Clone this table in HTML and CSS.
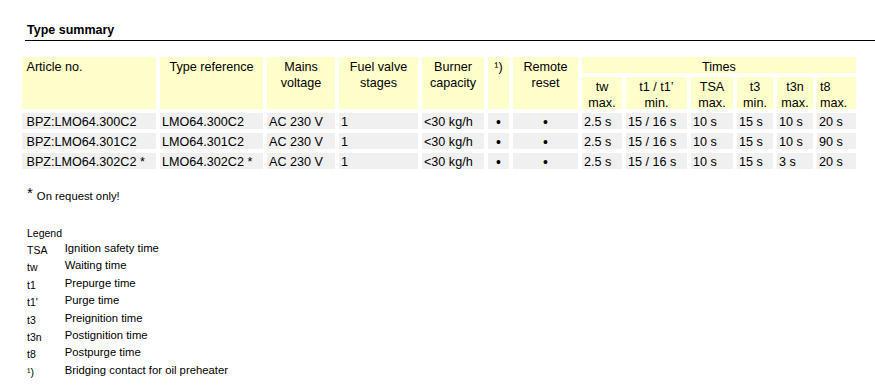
FILE: index.html
```html
<!DOCTYPE html>
<html lang="en">
<head>
<meta charset="utf-8">
<title>Type summary</title>
<link rel="stylesheet" href="styles.css">
</head>
<body>
<h2 class="title">Type summary</h2>

<div class="types">
  <div class="hd span2 first">Article no.</div>
  <div class="hd span2 c">Type reference</div>
  <div class="hd span2 c">Mains<br>voltage</div>
  <div class="hd span2 c">Fuel valve<br>stages</div>
  <div class="hd span2 c">Burner<br>capacity</div>
  <div class="hd span2 c">¹)</div>
  <div class="hd span2 c">Remote<br>reset</div>
  <div class="hd times c">Times</div>
  <div class="hd c">tw<br>max.</div>
  <div class="hd c">t1 / t1’<br>min.</div>
  <div class="hd c">TSA<br>max.</div>
  <div class="hd c">t3<br>min.</div>
  <div class="hd c">t3n<br>max.</div>
  <div class="hd last">t8<br>max.</div>

  <div class="cell first">BPZ:LMO64.300C2</div>
  <div class="cell">LMO64.300C2</div>
  <div class="cell">AC 230 V</div>
  <div class="cell">1</div>
  <div class="cell">&lt;30 kg/h</div>
  <div class="cell c dot">•</div>
  <div class="cell c dot">•</div>
  <div class="cell">2.5 s</div>
  <div class="cell">15 / 16 s</div>
  <div class="cell">10 s</div>
  <div class="cell">15 s</div>
  <div class="cell">10 s</div>
  <div class="cell">20 s</div>

  <div class="cell first">BPZ:LMO64.301C2</div>
  <div class="cell">LMO64.301C2</div>
  <div class="cell">AC 230 V</div>
  <div class="cell">1</div>
  <div class="cell">&lt;30 kg/h</div>
  <div class="cell c dot">•</div>
  <div class="cell c dot">•</div>
  <div class="cell">2.5 s</div>
  <div class="cell">15 / 16 s</div>
  <div class="cell">10 s</div>
  <div class="cell">15 s</div>
  <div class="cell">10 s</div>
  <div class="cell">90 s</div>

  <div class="cell first">BPZ:LMO64.302C2 *</div>
  <div class="cell">LMO64.302C2 *</div>
  <div class="cell">AC 230 V</div>
  <div class="cell">1</div>
  <div class="cell">&lt;30 kg/h</div>
  <div class="cell c dot">•</div>
  <div class="cell c dot">•</div>
  <div class="cell">2.5 s</div>
  <div class="cell">15 / 16 s</div>
  <div class="cell">10 s</div>
  <div class="cell">15 s</div>
  <div class="cell">3 s</div>
  <div class="cell">20 s</div>
</div>

<p class="footnote"><span class="star">*</span>On request only!</p>

<div class="legend">
  <div class="legend-title">Legend</div>
  <dl class="legend-list">
    <dt>TSA</dt><dd>Ignition safety time</dd>
    <dt>tw</dt><dd>Waiting time</dd>
    <dt>t1</dt><dd>Prepurge time</dd>
    <dt>t1'</dt><dd>Purge time</dd>
    <dt>t3</dt><dd>Preignition time</dd>
    <dt>t3n</dt><dd>Postignition time</dd>
    <dt>t8</dt><dd>Postpurge time</dd>
    <dt>¹)</dt><dd>Bridging contact for oil preheater</dd>
  </dl>
</div>
</body>
</html>
```

FILE: styles.css
```css
html, body {
  margin: 0;
  padding: 0;
  background: #ffffff;
}

body {
  font-family: "Liberation Sans", Arial, sans-serif;
  color: #000;
}

.title {
  margin: 22px 0 0 25px;
  padding: 0 0 2px 2px;
  font-size: 12.5px;
  line-height: 16px;
  font-weight: bold;
  border-bottom: 1px solid #000;
}

.types {
  display: grid;
  grid-template-columns: 134px 103px 68px 79px 62px 21px 65px 40px 61px 42px 36px 36px 39px;
  grid-template-rows: 16px 32px 16px 16px 16px;
  gap: 4px;
  margin: 16px 0 0 22px;
  font-size: 12.6px;
  line-height: 16px;
  white-space: nowrap;
}

.hd {
  background: #ffffcc;
  padding: 1.5px 2px 0 2px;
}

.span2 {
  grid-row: span 2;
}

.times {
  grid-column: span 6;
}

.cell {
  background: #f0f0f0;
  padding: 1px 2px 0 2px;
}

.c {
  text-align: center;
}

.dot {
  font-size: 14px;
}

.first {
  padding-left: 4.5px;
}

.last {
  padding-left: 3px;
}

.footnote {
  margin: 19px 0 0 27px;
  font-size: 11.3px;
  line-height: 16px;
}

.star {
  font-size: 15px;
  line-height: 0;
  vertical-align: 2px;
  margin-right: 4px;
}

.legend {
  margin: 22px 0 0 27px;
}

.legend-title {
  font-size: 10.5px;
  line-height: 14px;
}

.legend-list {
  display: grid;
  grid-template-columns: 37.7px auto;
  grid-auto-rows: 17.4px;
  margin: 0;
}

.legend-list dt {
  font-size: 10.5px;
  line-height: 17.4px;
  padding-top: 2px;
}

.legend-list dd {
  margin: 0;
  font-size: 11.3px;
  line-height: 17.4px;
}
```
